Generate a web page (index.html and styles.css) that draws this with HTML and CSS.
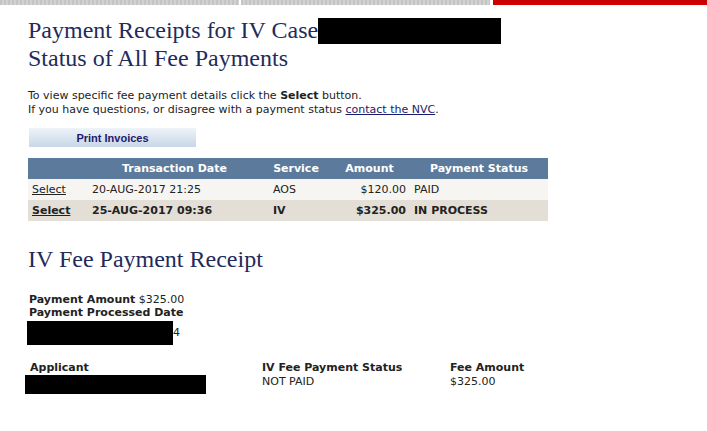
FILE: index.html
```html
<!DOCTYPE html>
<html lang="en">
  <head>
    <meta http-equiv="Content-Type" content="text/html;charset=UTF-8" />
    <title>Payment Receipts</title>
    <link rel="stylesheet" href="styles.css">
  </head>
  <body>
    <div class="topbar">
      <div class="tab first"></div>
      <div class="tab second"></div>
      <div class="tab active"></div>
    </div>

    <main class="content">
      <h1 class="title">Payment Receipts for IV Case<span class="redact case-no"></span><br>Status of All Fee Payments</h1>

      <p class="intro">
        To view specific fee payment details click the <b>Select</b> button.<br>
        If you have questions, or disagree with a payment status <a href="#">contact the NVC</a>.
      </p>

      <button class="print-btn" type="button">Print Invoices</button>

      <table class="payments">
        <colgroup>
          <col class="c-select"><col class="c-date"><col class="c-service"><col class="c-amount"><col class="c-status">
        </colgroup>
        <thead>
          <tr>
            <th></th>
            <th class="h-date">Transaction Date</th>
            <th class="h-service">Service</th>
            <th class="h-amount">Amount</th>
            <th>Payment Status</th>
          </tr>
        </thead>
        <tbody>
          <tr>
            <td><a href="#">Select</a></td>
            <td>20-AUG-2017 21:25</td>
            <td>AOS</td>
            <td class="num">$120.00</td>
            <td>PAID</td>
          </tr>
          <tr class="current">
            <td><a href="#">Select</a></td>
            <td>25-AUG-2017 09:36</td>
            <td>IV</td>
            <td class="num">$325.00</td>
            <td>IN PROCESS</td>
          </tr>
        </tbody>
      </table>

      <h2 class="receipt-title">IV Fee Payment Receipt</h2>

      <div class="receipt">
        <div><b>Payment Amount</b> $325.00</div>
        <div><b>Payment Processed Date</b></div>
        <div class="processed"><span class="redact date-box"></span>4</div>
      </div>

      <div class="details">
        <div class="field applicant">
          <b>Applicant</b>
          <span class="redact name-box"></span>
        </div>
        <div class="field status">
          <b>IV Fee Payment Status</b>
          <span>NOT PAID</span>
        </div>
        <div class="field fee">
          <b>Fee Amount</b>
          <span>$325.00</span>
        </div>
      </div>
    </main>
  </body>
</html>
```

FILE: styles.css
```css
body { margin: 0; padding: 0; background: #fff; color: #222; font-family: Verdana, "DejaVu Sans", sans-serif; font-size: 11px; }

/* top navigation strip */
.topbar { display: flex; gap: 2px; height: 5px; }
.topbar .tab { background: repeating-linear-gradient(90deg, #c4c4c4 0 2px, #d2d2d2 2px 4px); }
.topbar .tab.first { width: 239px; }
.topbar .tab.second { width: 249px; }
.topbar .tab.active { flex: 1; background: #cc0000; margin-left: 1px; }

.content { padding: 0 0 0 28px; }

.title { margin: 11px 0 0; font-family: "Liberation Serif", "Times New Roman", serif; font-weight: normal; font-size: 24px; line-height: 28px; color: #1f2b5b; }
.redact { display: inline-block; background: #000; vertical-align: top; }
.case-no { width: 183px; height: 26px; margin-top: 2px; }

.intro { margin: 17px 0 0; line-height: 14px; }
.intro a { color: #1a1a6e; }

.print-btn { display: block; margin: 11px 0 0 1px; width: 167px; height: 19px; padding: 0; border: none; background: linear-gradient(#eef3f9, #c9d7e7); color: #211a6e; font-family: "Liberation Sans", Arial, sans-serif; font-weight: bold; font-size: 11px; cursor: pointer; }

.payments { margin-top: 11px; width: 520px; border-collapse: collapse; table-layout: fixed; }
.payments col.c-select { width: 60px; }
.payments col.c-date { width: 181px; }
.payments col.c-service { width: 66px; }
.payments col.c-amount { width: 75px; }
.payments col.c-status { width: 138px; }
.payments th { height: 21px; padding: 0 4px; background: #5c7a9c; color: #fff; font-weight: bold; text-align: center; white-space: nowrap; }
.payments th.h-date { padding-right: 12px; }
.payments th.h-service { padding-right: 16px; }
.payments th.h-amount { padding-right: 10px; }
.payments td { height: 21px; padding: 0 4px; background: #f6f5f1; white-space: nowrap; }
.payments td.num { text-align: right; }
.payments td a { color: #222; }
.payments tr.current td { background: #e3ded6; font-weight: bold; }

.receipt-title { margin: 24px 0 0; font-family: "Liberation Serif", "Times New Roman", serif; font-weight: normal; font-size: 24px; line-height: 28px; color: #1f2b5b; }

.receipt { margin-top: 20px; padding-left: 1px; line-height: 13px; }
.receipt .processed { margin-top: 2px; margin-left: -2px; line-height: 24px; }
.date-box { width: 146px; height: 24px; }

.details { display: flex; margin-top: 16px; }
.details .field { display: flex; flex-direction: column; line-height: 14px; }
.details .applicant { width: 232px; padding-left: 2px; }
.details .status { width: 188px; }
.name-box { width: 181px; height: 19px; margin: 0 0 0 -5px; }
```
